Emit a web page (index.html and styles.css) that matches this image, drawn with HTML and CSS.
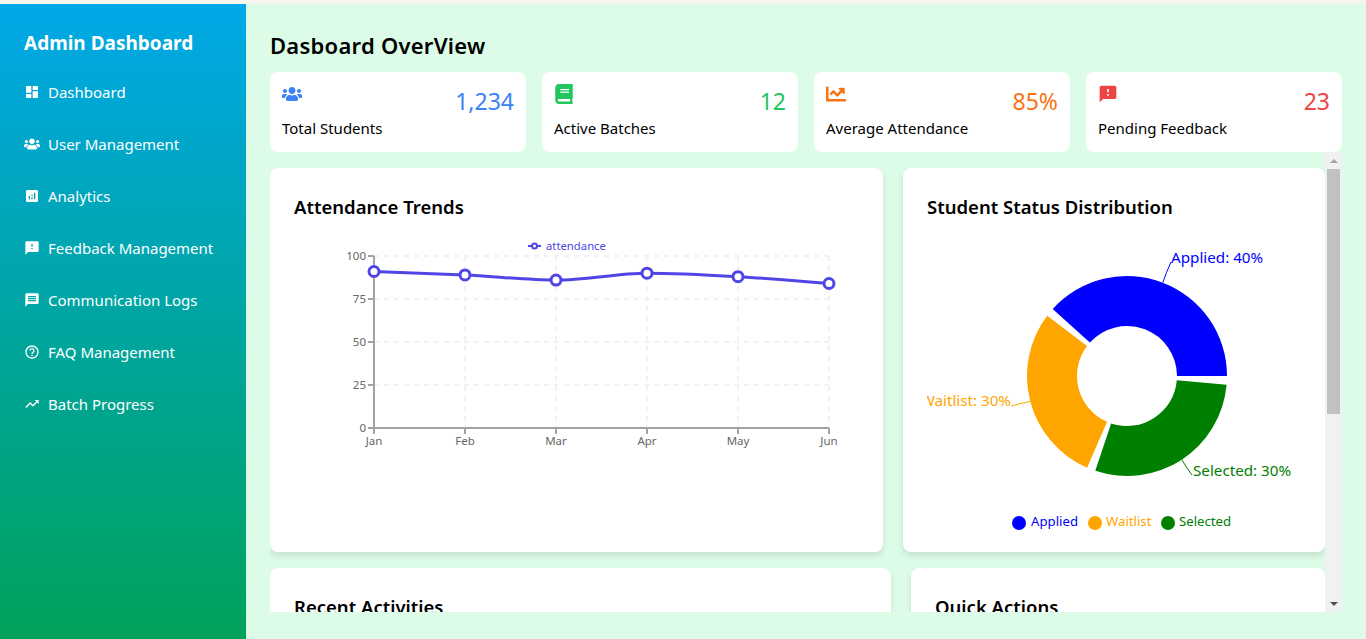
FILE: index.html
```html
<!DOCTYPE html>
<html lang="en">
<head>
    <meta charset="UTF-8">
    <meta name="viewport" content="width=device-width, initial-scale=1.0">
    <title>Admin Dashboard</title>
    <link rel="stylesheet" href="styles.css">
</head>
<body>
    <div class="layout">
        <aside class="sidebar">
            <h2>Admin Dashboard</h2>
            <nav class="nav">
                <a class="nav-item" href="#">
                    <svg viewBox="0 0 24 24"><path d="M3 13h8V3H3v10zm0 8h8v-6H3v6zm10 0h8V11h-8v10zm0-18v6h8V3h-8z"/></svg>
                    Dashboard
                </a>
                <a class="nav-item" href="#">
                    <svg viewBox="0 0 640 512"><path d="M96 224c35.3 0 64-28.7 64-64s-28.7-64-64-64-64 28.7-64 64 28.7 64 64 64zm448 0c35.3 0 64-28.7 64-64s-28.7-64-64-64-64 28.7-64 64 28.7 64 64 64zm32 32h-64c-17.6 0-33.5 7.1-45.1 18.6 40.3 22.1 68.9 62 75.1 109.4h66c17.7 0 32-14.3 32-32v-32c0-35.3-28.7-64-64-64zm-256 0c61.9 0 112-50.1 112-112S381.9 32 320 32 208 82.1 208 144s50.1 112 112 112zm76.8 32h-8.3c-20.8 10-43.9 16-68.5 16s-47.6-6-68.5-16h-8.3C179.6 288 128 339.6 128 403.2V432c0 26.5 21.5 48 48 48h288c26.5 0 48-21.5 48-48v-28.8c0-63.6-51.6-115.2-115.2-115.2zm-223.7-13.4C161.5 263.1 145.6 256 128 256H64c-35.3 0-64 28.7-64 64v32c0 17.7 14.3 32 32 32h65.9c6.3-47.4 34.9-87.3 75.2-109.4z"/></svg>
                    User Management
                </a>
                <a class="nav-item" href="#">
                    <svg viewBox="0 0 24 24"><path d="M19 3H5c-1.1 0-2 .9-2 2v14c0 1.1.9 2 2 2h14c1.1 0 2-.9 2-2V5c0-1.1-.9-2-2-2zM9 17H7v-5h2v5zm4 0h-2v-3h2v3zm0-5h-2v-2h2v2zm4 5h-2V7h2v10z"/></svg>
                    Analytics
                </a>
                <a class="nav-item" href="#">
                    <svg viewBox="0 0 24 24"><path d="M20 2H4c-1.1 0-1.99.9-1.99 2L2 22l4-4h14c1.1 0 2-.9 2-2V4c0-1.1-.9-2-2-2zm-7 12h-2v-2h2v2zm0-4h-2V6h2v4z"/></svg>
                    Feedback Management
                </a>
                <a class="nav-item" href="#">
                    <svg viewBox="0 0 24 24"><path d="M20 2H4c-1.1 0-1.99.9-1.99 2L2 22l4-4h14c1.1 0 2-.9 2-2V4c0-1.1-.9-2-2-2zm-2 12H6v-2h12v2zm0-3H6V9h12v2zm0-3H6V6h12v2z"/></svg>
                    Communication Logs
                </a>
                <a class="nav-item" href="#">
                    <svg viewBox="0 0 24 24"><path d="M11 18h2v-2h-2v2zm1-16C6.48 2 2 6.48 2 12s4.48 10 10 10 10-4.48 10-10S17.52 2 12 2zm0 18c-4.41 0-8-3.59-8-8s3.59-8 8-8 8 3.59 8 8-3.59 8-8 8zm0-14c-2.21 0-4 1.79-4 4h2c0-1.1.9-2 2-2s2 .9 2 2c0 2-3 1.75-3 5h2c0-2.25 3-2.5 3-5 0-2.21-1.79-4-4-4z"/></svg>
                    FAQ Management
                </a>
                <a class="nav-item" href="#">
                    <svg viewBox="0 0 24 24"><path d="M16 6l2.29 2.29-4.88 4.88-4-4L2 16.59 3.41 18l6-6 4 4 6.3-6.29L22 12V6z"/></svg>
                    Batch Progress
                </a>
            </nav>
        </aside>

        <main class="main">
            <h1>Dasboard OverView</h1>

            <div class="stats">
                <div class="stat">
                    <div class="stat-top">
                        <svg class="stat-icon blue" viewBox="0 0 640 512"><path d="M96 224c35.3 0 64-28.7 64-64s-28.7-64-64-64-64 28.7-64 64 28.7 64 64 64zm448 0c35.3 0 64-28.7 64-64s-28.7-64-64-64-64 28.7-64 64 28.7 64 64 64zm32 32h-64c-17.6 0-33.5 7.1-45.1 18.6 40.3 22.1 68.9 62 75.1 109.4h66c17.7 0 32-14.3 32-32v-32c0-35.3-28.7-64-64-64zm-256 0c61.9 0 112-50.1 112-112S381.9 32 320 32 208 82.1 208 144s50.1 112 112 112zm76.8 32h-8.3c-20.8 10-43.9 16-68.5 16s-47.6-6-68.5-16h-8.3C179.6 288 128 339.6 128 403.2V432c0 26.5 21.5 48 48 48h288c26.5 0 48-21.5 48-48v-28.8c0-63.6-51.6-115.2-115.2-115.2zm-223.7-13.4C161.5 263.1 145.6 256 128 256H64c-35.3 0-64 28.7-64 64v32c0 17.7 14.3 32 32 32h65.9c6.3-47.4 34.9-87.3 75.2-109.4z"/></svg>
                        <span class="stat-value blue">1,234</span>
                    </div>
                    <div class="stat-label">Total Students</div>
                </div>
                <div class="stat">
                    <div class="stat-top">
                        <svg class="stat-icon green" viewBox="0 0 448 512"><path d="M448 360V24c0-13.3-10.7-24-24-24H96C43 0 0 43 0 96v320c0 53 43 96 96 96h328c13.3 0 24-10.7 24-24v-16c0-7.5-3.5-14.3-8.9-18.7-4.2-15.4-4.2-59.3 0-74.7 5.4-4.3 8.9-11.1 8.9-18.6zM128 134c0-3.3 2.7-6 6-6h212c3.3 0 6 2.7 6 6v20c0 3.3-2.7 6-6 6H134c-3.3 0-6-2.7-6-6v-20zm0 64c0-3.3 2.7-6 6-6h212c3.3 0 6 2.7 6 6v20c0 3.3-2.7 6-6 6H134c-3.3 0-6-2.7-6-6v-20zm253.4 250H96c-17.7 0-32-14.3-32-32 0-17.6 14.4-32 32-32h285.4c-1.9 17.1-1.9 46.9 0 64z"/></svg>
                        <span class="stat-value green">12</span>
                    </div>
                    <div class="stat-label">Active Batches</div>
                </div>
                <div class="stat">
                    <div class="stat-top">
                        <svg class="stat-icon orange" viewBox="0 0 512 512"><path d="M496 384H64V80c0-8.84-7.16-16-16-16H16C7.16 64 0 71.16 0 80v336c0 17.67 14.33 32 32 32h464c8.84 0 16-7.16 16-16v-32c0-8.84-7.16-16-16-16zM464 96H345.94c-21.38 0-32.09 25.85-16.97 40.97l32.4 32.4L288 242.75l-73.37-73.37c-12.5-12.5-32.76-12.5-45.25 0l-68.69 68.69c-6.25 6.25-6.25 16.38 0 22.63l22.62 22.62c6.25 6.25 16.38 6.25 22.63 0L192 237.25l73.37 73.37c12.5 12.5 32.76 12.5 45.25 0l96-96 32.4 32.4c15.12 15.12 40.97 4.41 40.97-16.97V112c0-8.84-7.16-16-16-16z"/></svg>
                        <span class="stat-value orange">85%</span>
                    </div>
                    <div class="stat-label">Average Attendance</div>
                </div>
                <div class="stat">
                    <div class="stat-top">
                        <svg class="stat-icon red" viewBox="0 0 24 24"><path d="M20 2H4c-1.1 0-1.99.9-1.99 2L2 22l4-4h14c1.1 0 2-.9 2-2V4c0-1.1-.9-2-2-2zm-7 12h-2v-2h2v2zm0-4h-2V6h2v4z"/></svg>
                        <span class="stat-value red">23</span>
                    </div>
                    <div class="stat-label">Pending Feedback</div>
                </div>
            </div>

            <div class="scroll-area">
                <div class="scroll">
                    <div class="row row-charts">
                        <section class="card">
                            <h3>Attendance Trends</h3>
                            <svg class="chart" viewBox="294 232 565 304">
                                <g class="grid">
                                    <path d="M374 256H829M374 299H829M374 342H829M374 385H829"/>
                                    <path d="M374 256V428M465 256V428M556 256V428M647 256V428M738 256V428M829 256V428"/>
                                </g>
                                <g class="axis">
                                    <path d="M374 256V428H829"/>
                                    <path d="M368 256H374M368 299H374M368 342H374M368 385H374M368 428H374"/>
                                    <path d="M374 428V434M465 428V434M556 428V434M647 428V434M738 428V434M829 428V434"/>
                                </g>
                                <g class="tick-y">
                                    <text x="366" y="260">100</text>
                                    <text x="366" y="303">75</text>
                                    <text x="366" y="346">50</text>
                                    <text x="366" y="389">25</text>
                                    <text x="366" y="432">0</text>
                                </g>
                                <g class="tick-x">
                                    <text x="374" y="445">Jan</text>
                                    <text x="465" y="445">Feb</text>
                                    <text x="556" y="445">Mar</text>
                                    <text x="647" y="445">Apr</text>
                                    <text x="738" y="445">May</text>
                                    <text x="829" y="445">Jun</text>
                                </g>
                                <path class="line" d="M374 271.48C404.33 272.48 434.67 273.49 465 274.92C495.33 276.35 525.67 280.08 556 280.08C586.33 280.08 616.67 273.2 647 273.2C677.33 273.2 707.67 274.92 738 276.64C768.33 278.36 798.67 280.94 829 283.52"/>
                                <g class="dots">
                                    <circle cx="374" cy="271.48" r="5"/>
                                    <circle cx="465" cy="274.92" r="5"/>
                                    <circle cx="556" cy="280.08" r="5"/>
                                    <circle cx="647" cy="273.2" r="5"/>
                                    <circle cx="738" cy="276.64" r="5"/>
                                    <circle cx="829" cy="283.52" r="5"/>
                                </g>
                                <path class="legend-line" d="M528 246H541"/>
                                <circle class="legend-dot" cx="534.5" cy="246" r="2.5"/>
                                <text class="legend-text" x="546" y="250">attendance</text>
                            </svg>
                        </section>

                        <section class="card">
                            <h3>Student Status Distribution</h3>
                            <svg class="chart" viewBox="927 232 374 304">
                                <path fill="#0000ff" d="M1227 376A100 100 0 0 0 1052.69 309.09L1089.84 342.54A50 50 0 0 1 1177 376Z"/>
                                <path fill="#ffa500" d="M1047.14 315.82A100 100 0 0 0 1087.13 467.71L1107.06 421.85A50 50 0 0 1 1087.07 345.91Z"/>
                                <path fill="#008000" d="M1095.27 470.83A100 100 0 0 0 1226.62 384.72L1176.81 380.36A50 50 0 0 1 1111.13 423.41Z"/>
                                <path class="leader" stroke="#0000ff" d="M1162.8 282.6Q1166 273 1171 262"/>
                                <path class="leader" stroke="#ffa500" d="M1030.3 401.5Q1021 403 1011.5 406"/>
                                <path class="leader" stroke="#008000" d="M1181.8 459.6Q1186 467 1192 475"/>
                                <text class="pie-label" fill="#0000ff" x="1171" y="263">Applied: 40%</text>
                                <text class="pie-label end" fill="#ffa500" x="1011" y="406">Waitlist: 30%</text>
                                <text class="pie-label" fill="#008000" x="1193" y="476">Selected: 30%</text>
                                <circle fill="#0000ff" cx="1019" cy="523" r="7"/>
                                <text class="pie-legend" fill="#0000ff" x="1031" y="526">Applied</text>
                                <circle fill="#ffa500" cx="1095" cy="523" r="7"/>
                                <text class="pie-legend" fill="#ffa500" x="1106" y="526">Waitlist</text>
                                <circle fill="#008000" cx="1168" cy="523" r="7"/>
                                <text class="pie-legend" fill="#008000" x="1179" y="526">Selected</text>
                            </svg>
                        </section>
                    </div>

                    <div class="row row-lists">
                        <section class="card card-low">
                            <h3>Recent Activities</h3>
                        </section>
                        <section class="card card-low">
                            <h3>Quick Actions</h3>
                        </section>
                    </div>
                </div>

                <div class="scrollbar">
                    <div class="scroll-btn"><span class="arrow-up"></span></div>
                    <div class="scroll-track"><div class="scroll-thumb"></div></div>
                    <div class="scroll-btn"><span class="arrow-down"></span></div>
                </div>
            </div>
        </main>
    </div>
</body>
</html>
```
FILE: styles.css
```css
* {
    box-sizing: border-box;
}
html, body {
    height: 100%;
}
body {
    margin: 0;
    padding-top: 4px;
    background: #f6f6f1;
    color: #000;
    font-family: "Noto Sans", "Open Sans", sans-serif;
    overflow: hidden;
}
h1, h2, h3 {
    margin: 0;
}
.layout {
    display: flex;
    height: 100%;
}

/* sidebar */
.sidebar {
    width: 246px;
    flex-shrink: 0;
    padding: 24px;
    background: linear-gradient(#00a8e8, #00a25a);
    color: #fff;
}
.sidebar h2 {
    font-size: 19px;
    line-height: 30px;
    font-weight: 700;
    margin-bottom: 8px;
}
.nav {
    display: flex;
    flex-direction: column;
}
.nav-item {
    display: flex;
    align-items: center;
    gap: 8px;
    height: 52px;
    color: #fff;
    font-size: 15px;
    text-decoration: none;
}
.nav-item svg {
    width: 16px;
    height: 16px;
    fill: currentColor;
    flex-shrink: 0;
}

/* main column */
.main {
    flex: 1;
    min-width: 0;
    display: flex;
    flex-direction: column;
    padding: 23px 24px 27px;
    background: #dcfce7;
}
.main h1 {
    font-size: 22px;
    line-height: 36px;
    font-weight: 600;
    letter-spacing: 0.25px;
    margin-bottom: 9px;
}
.stats {
    display: grid;
    grid-template-columns: repeat(4, 1fr);
    gap: 16px;
    flex-shrink: 0;
}
.stat {
    height: 80px;
    padding: 12px;
    background: #fff;
    border-radius: 8px;
}
.stat-top {
    display: flex;
    justify-content: space-between;
    height: 34px;
}
.stat-icon {
    width: 20px;
    height: 20px;
    fill: currentColor;
}
.stat-value {
    font-size: 23px;
    line-height: 34px;
}
.stat-label {
    margin-top: -2px;
    font-size: 15px;
    line-height: 24px;
}
.blue { color: #3b82f6; }
.green { color: #22c55e; }
.orange { color: #f97316; }
.red { color: #ef4444; }

/* scrolling part with the charts */
.scroll-area {
    flex: 1;
    min-height: 0;
    display: flex;
}
.scroll {
    flex: 1;
    min-width: 0;
    padding-top: 16px;
    overflow: hidden;
}
.scrollbar {
    width: 17px;
    flex-shrink: 0;
    display: flex;
    flex-direction: column;
    background: #f1f1f1;
}
.scroll-btn {
    height: 17px;
    display: flex;
    align-items: center;
    justify-content: center;
}
.arrow-up {
    border-left: 4px solid transparent;
    border-right: 4px solid transparent;
    border-bottom: 4px solid #a3a3a3;
}
.arrow-down {
    border-left: 4px solid transparent;
    border-right: 4px solid transparent;
    border-top: 4px solid #505050;
}
.scroll-track {
    flex: 1;
    padding: 0 2px;
}
.scroll-thumb {
    height: 245px;
    background: #c1c1c1;
}
.row {
    display: grid;
    gap: 20px;
    margin-bottom: 16px;
}
.row-charts {
    grid-template-columns: 613px 1fr;
}
.row-lists {
    grid-template-columns: 3fr 2fr;
}
.card {
    height: 384px;
    padding: 24px;
    background: #fff;
    border-radius: 8px;
    box-shadow: 0 4px 6px rgba(0, 0, 0, 0.1);
}
.card-low {
    height: 300px;
}
.card h3 {
    font-size: 18.5px;
    line-height: 30px;
    font-weight: 600;
}
.chart {
    display: block;
    width: 100%;
    height: 304px;
    margin-top: 10px;
}

/* chart pieces */
.grid path {
    fill: none;
    stroke: #eeeeee;
    stroke-width: 1.5;
    stroke-dasharray: 5 5;
}
.axis path {
    fill: none;
    stroke: #a3a3a3;
    stroke-width: 2;
}
.chart text {
    font-family: "Noto Sans", "Open Sans", sans-serif;
}
.tick-y text, .tick-x text {
    font-size: 11.5px;
    fill: #666;
}
.tick-y text {
    text-anchor: end;
}
.tick-x text {
    text-anchor: middle;
}
.line {
    fill: none;
    stroke: #4f46e5;
    stroke-width: 3;
}
.dots circle {
    fill: #fff;
    stroke: #4f46e5;
    stroke-width: 3;
}
.legend-line {
    stroke: #4f46e5;
    stroke-width: 2;
}
.legend-dot {
    fill: #fff;
    stroke: #4f46e5;
    stroke-width: 2;
}
.legend-text {
    font-size: 11.3px;
    fill: #4f46e5;
}
.leader {
    fill: none;
    stroke-width: 1;
}
.pie-label {
    font-size: 15.2px;
}
.pie-label.end {
    text-anchor: end;
}
.pie-legend {
    font-size: 13.2px;
}
```
